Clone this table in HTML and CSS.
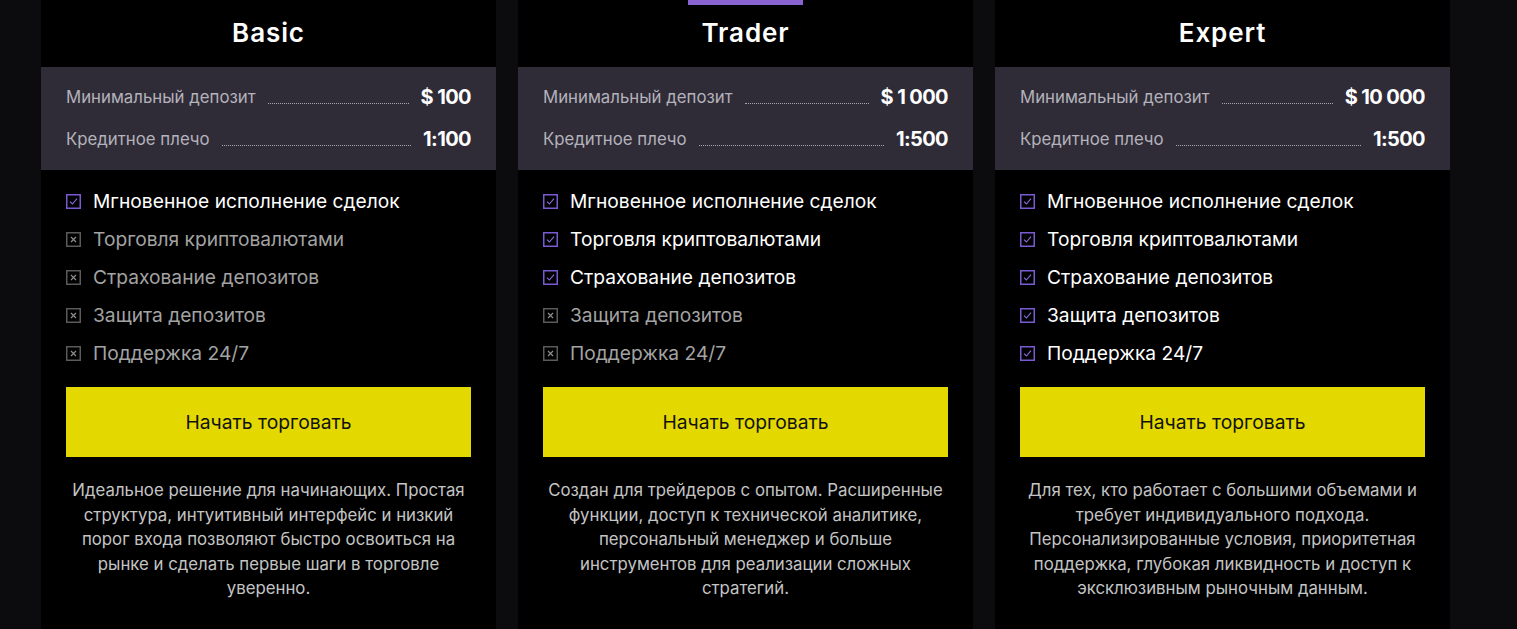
FILE: index.html
```html
<!DOCTYPE html>
<html lang="ru">
<head>
<meta charset="utf-8">
<link rel="stylesheet" href="styles.css">
</head>
<body>
<div class="plans">
  <div class="card">
    <div class="card-head"><h2 class="title">Basic</h2></div>
    <div class="terms">
      <div class="term"><span class="term-label">Минимальный депозит</span><span class="leader"></span><span class="term-value">$ 100</span></div>
      <div class="term"><span class="term-label">Кредитное плечо</span><span class="leader"></span><span class="term-value">1:100</span></div>
    </div>
    <ul class="features">
      <li class="feature on"><svg class="cb" viewBox="0 0 15 15"><rect x="0.75" y="0.75" width="13.5" height="13.5"/><path d="M4 7.6 L6.4 10 L11 4.6"/></svg>Мгновенное исполнение сделок</li>
      <li class="feature off"><svg class="cb" viewBox="0 0 15 15"><rect x="0.75" y="0.75" width="13.5" height="13.5"/><path d="M5 5 L10 10 M10 5 L5 10"/></svg>Торговля криптовалютами</li>
      <li class="feature off"><svg class="cb" viewBox="0 0 15 15"><rect x="0.75" y="0.75" width="13.5" height="13.5"/><path d="M5 5 L10 10 M10 5 L5 10"/></svg>Страхование депозитов</li>
      <li class="feature off"><svg class="cb" viewBox="0 0 15 15"><rect x="0.75" y="0.75" width="13.5" height="13.5"/><path d="M5 5 L10 10 M10 5 L5 10"/></svg>Защита депозитов</li>
      <li class="feature off"><svg class="cb" viewBox="0 0 15 15"><rect x="0.75" y="0.75" width="13.5" height="13.5"/><path d="M5 5 L10 10 M10 5 L5 10"/></svg>Поддержка 24/7</li>
    </ul>
    <a class="btn">Начать торговать</a>
    <p class="desc">Идеальное решение для начинающих. Простая структура, интуитивный интерфейс и низкий порог входа позволяют быстро освоиться на рынке и сделать первые шаги в торговле уверенно.</p>
  </div>

  <div class="card featured">
    <div class="card-head"><span class="badge"></span><h2 class="title">Trader</h2></div>
    <div class="terms">
      <div class="term"><span class="term-label">Минимальный депозит</span><span class="leader"></span><span class="term-value">$ 1 000</span></div>
      <div class="term"><span class="term-label">Кредитное плечо</span><span class="leader"></span><span class="term-value">1:500</span></div>
    </div>
    <ul class="features">
      <li class="feature on"><svg class="cb" viewBox="0 0 15 15"><rect x="0.75" y="0.75" width="13.5" height="13.5"/><path d="M4 7.6 L6.4 10 L11 4.6"/></svg>Мгновенное исполнение сделок</li>
      <li class="feature on"><svg class="cb" viewBox="0 0 15 15"><rect x="0.75" y="0.75" width="13.5" height="13.5"/><path d="M4 7.6 L6.4 10 L11 4.6"/></svg>Торговля криптовалютами</li>
      <li class="feature on"><svg class="cb" viewBox="0 0 15 15"><rect x="0.75" y="0.75" width="13.5" height="13.5"/><path d="M4 7.6 L6.4 10 L11 4.6"/></svg>Страхование депозитов</li>
      <li class="feature off"><svg class="cb" viewBox="0 0 15 15"><rect x="0.75" y="0.75" width="13.5" height="13.5"/><path d="M5 5 L10 10 M10 5 L5 10"/></svg>Защита депозитов</li>
      <li class="feature off"><svg class="cb" viewBox="0 0 15 15"><rect x="0.75" y="0.75" width="13.5" height="13.5"/><path d="M5 5 L10 10 M10 5 L5 10"/></svg>Поддержка 24/7</li>
    </ul>
    <a class="btn">Начать торговать</a>
    <p class="desc">Создан для трейдеров с опытом. Расширенные функции, доступ к технической аналитике, персональный менеджер и больше инструментов для реализации сложных стратегий.</p>
  </div>

  <div class="card">
    <div class="card-head"><h2 class="title">Expert</h2></div>
    <div class="terms">
      <div class="term"><span class="term-label">Минимальный депозит</span><span class="leader"></span><span class="term-value">$ 10 000</span></div>
      <div class="term"><span class="term-label">Кредитное плечо</span><span class="leader"></span><span class="term-value">1:500</span></div>
    </div>
    <ul class="features">
      <li class="feature on"><svg class="cb" viewBox="0 0 15 15"><rect x="0.75" y="0.75" width="13.5" height="13.5"/><path d="M4 7.6 L6.4 10 L11 4.6"/></svg>Мгновенное исполнение сделок</li>
      <li class="feature on"><svg class="cb" viewBox="0 0 15 15"><rect x="0.75" y="0.75" width="13.5" height="13.5"/><path d="M4 7.6 L6.4 10 L11 4.6"/></svg>Торговля криптовалютами</li>
      <li class="feature on"><svg class="cb" viewBox="0 0 15 15"><rect x="0.75" y="0.75" width="13.5" height="13.5"/><path d="M4 7.6 L6.4 10 L11 4.6"/></svg>Страхование депозитов</li>
      <li class="feature on"><svg class="cb" viewBox="0 0 15 15"><rect x="0.75" y="0.75" width="13.5" height="13.5"/><path d="M4 7.6 L6.4 10 L11 4.6"/></svg>Защита депозитов</li>
      <li class="feature on"><svg class="cb" viewBox="0 0 15 15"><rect x="0.75" y="0.75" width="13.5" height="13.5"/><path d="M4 7.6 L6.4 10 L11 4.6"/></svg>Поддержка 24/7</li>
    </ul>
    <a class="btn">Начать торговать</a>
    <p class="desc">Для тех, кто работает с большими объемами и требует индивидуального подхода. Персонализированные условия, приоритетная поддержка, глубокая ликвидность и доступ к эксклюзивным рыночным данным.</p>
  </div>
</div>
</body>
</html>
```

FILE: styles.css
```css
* { box-sizing: border-box; }
html, body { margin: 0; padding: 0; }
body {
  background: #0c0c0f;
  font-family: Inter, "Noto Sans", sans-serif;
  color: #fff;
  height: 629px;
  overflow: hidden;
}
.plans {
  display: flex;
  gap: 22px;
  padding-left: 41px;
}
.card {
  width: 455px;
  background: #000;
  height: 660px;
  display: flex;
  flex-direction: column;
}
.card-head {
  height: 67px;
  position: relative;
  display: flex;
  align-items: center;
  justify-content: center;
}
.badge {
  position: absolute;
  top: 0;
  left: 170px;
  width: 115px;
  height: 5px;
  background: #8a63d2;
}
.title {
  margin: 0;
  font-size: 26px;
  font-weight: 600;
  letter-spacing: 0.9px;
  line-height: 30px;
  padding-bottom: 1px;
}
.terms {
  background: #2f2c38;
  padding: 19px 25px 20px;
  display: flex;
  flex-direction: column;
  gap: 20px;
}
.term {
  display: flex;
  height: 22px;
  line-height: 22px;
}
.term-label {
  font-size: 16.8px;
  color: #b4b2ba;
}
.leader {
  flex: 1;
  margin: 0 12px 4px;
  border-bottom: 1px dotted #a9a7b0;
  align-self: flex-end;
  height: 1px;
}
.term-value {
  font-size: 20px;
  font-weight: 700;
  letter-spacing: -0.6px;
}
.features {
  list-style: none;
  margin: 0;
  padding: 19px 25px 0;
  display: flex;
  flex-direction: column;
  gap: 14px;
}
.feature {
  display: flex;
  align-items: center;
  height: 24px;
  font-size: 19.2px;
  line-height: 24px;
}
.feature.on { color: #fff; }
.feature.off { color: #a3a3a3; }
.cb {
  width: 15px;
  height: 15px;
  margin-right: 12px;
  flex: none;
  fill: none;
}
.on .cb rect { stroke: #7a5ad2; stroke-width: 1.5; }
.on .cb path { stroke: #8c6ce0; stroke-width: 1.1; }
.off .cb rect { stroke: #5a5a5a; stroke-width: 1.5; }
.off .cb path { stroke: #8e8e8e; stroke-width: 1.2; }
.btn {
  display: flex;
  align-items: center;
  justify-content: center;
  margin: 22px 25px 0;
  height: 70px;
  background: #e3d900;
  color: #111;
  font-size: 19.3px;
  font-weight: 400;
}
.desc {
  margin: 21px 25px 0;
  text-align: center;
  font-size: 16.8px;
  line-height: 24.5px;
  color: #c4c4c4;
}
```
